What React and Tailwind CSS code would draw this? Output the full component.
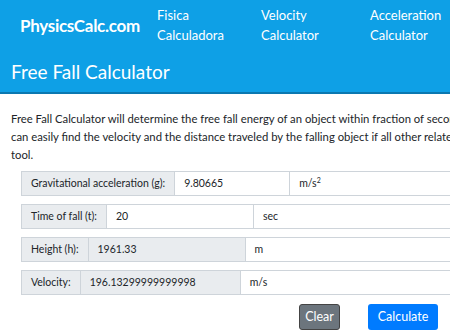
import React from "react";

function Row({ label, value, unit, inputW, readOnly }) {
  return (
    <div className="flex h-[25px] w-[600px] text-[10.5px] text-[#212529]">
      <div className="flex items-center px-[9px] bg-[#e9ecef] border border-[#ced4da] whitespace-nowrap">
        {label}
      </div>
      <div
        className={`flex items-center px-[9px] border-y border-[#ced4da] ${readOnly ? "bg-[#e9ecef]" : "bg-white"}`}
        style={{ width: inputW }}
      >
        {value}
      </div>
      <div className="flex items-center flex-1 px-[9px] border border-[#ced4da] bg-white">
        {unit}
      </div>
    </div>
  );
}

export default function App() {
  return (
    <div className="w-[450px] h-[334px] overflow-hidden bg-white font-['Lato','Liberation_Sans',sans-serif]">
      <div className="h-[94px] bg-[#0ea0e6] border-b-2 border-[#0b78b0] text-white flex flex-col">
        <div className="flex items-start h-[52px]">
          <div className="pl-[20px] pt-[13px] text-[17px] font-bold tracking-[-0.3px] w-[157px]">
            PhysicsCalc.com
          </div>
          <div className="pt-[5px] text-[13px] leading-[20px] w-[104px]">
            Fisica<br />Calculadora
          </div>
          <div className="pt-[5px] text-[13px] leading-[20px] w-[109px]">
            Velocity<br />Calculator
          </div>
          <div className="pt-[5px] text-[13px] leading-[20px]">
            Acceleration<br />Calculator
          </div>
        </div>
        <div className="pl-[11px] pt-[7px] text-[19px] leading-[26px]">Free Fall Calculator</div>
      </div>
      <p className="pl-[11px] pt-[16px] text-[11.3px] leading-[18px] text-[#212529] whitespace-nowrap">
        Free Fall Calculator will determine the free fall energy of an object within fraction of seconds. You
        <br />
        can easily find the velocity and the distance traveled by the falling object if all other related values are given in this
        <br />
        tool.
      </p>
      <div className="pl-[21px] pt-[7px] flex flex-col gap-[8px]">
        <Row label="Gravitational acceleration (g):" value="9.80665" unit={<span>m/s<sup className="text-[7px]">2</sup></span>} inputW={114} />
        <Row label="Time of fall (t):" value="20" unit="sec" inputW={146} />
        <Row label="Height (h):" value="1961.33" unit="m" inputW={156} readOnly />
        <Row label="Velocity:" value="196.13299999999998" unit="m/s" inputW={159} readOnly />
      </div>
      <div className="flex pl-[299px] pt-[9px] gap-[28px] text-[12.5px]">
        <button className="h-[26px] w-[41px] rounded-[3px] bg-[#6c757d] border border-[#444] text-white">Clear</button>
        <button className="h-[26px] w-[70px] rounded-[3px] bg-[#007bff] text-white">Calculate</button>
      </div>
    </div>
  );
}
